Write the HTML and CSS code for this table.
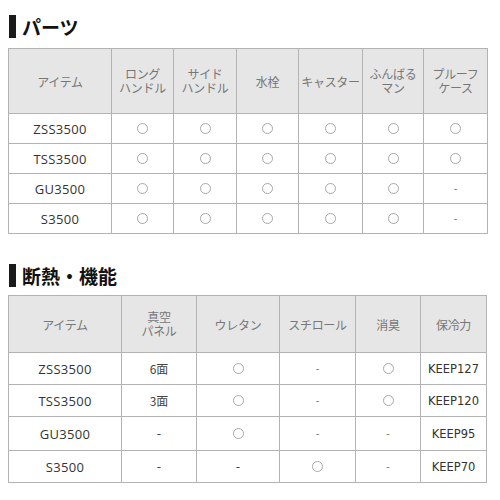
FILE: index.html
```html
<!DOCTYPE html>
<html lang="ja">
<head>
<meta charset="utf-8">
<link rel="stylesheet" href="styles.css">
</head>
<body>
<h2 class="heading h1"><span class="bar"></span>パーツ</h2>
<table class="spec t1">
  <colgroup>
    <col class="c1"><col class="c2"><col class="c3"><col class="c4"><col class="c5"><col class="c6"><col class="c7">
  </colgroup>
  <thead>
    <tr>
      <th>アイテム</th>
      <th><span class="ln">ロング</span><span class="ln">ハンドル</span></th>
      <th><span class="ln">サイド</span><span class="ln">ハンドル</span></th>
      <th>水栓</th>
      <th>キャスター</th>
      <th><span class="ln">ふんばる</span><span class="ln">マン</span></th>
      <th><span class="ln">プルーフ</span><span class="ln">ケース</span></th>
    </tr>
  </thead>
  <tbody>
    <tr><td class="model">ZSS3500</td><td><span class="o"></span></td><td><span class="o"></span></td><td><span class="o"></span></td><td><span class="o"></span></td><td><span class="o"></span></td><td><span class="o"></span></td></tr>
    <tr><td class="model">TSS3500</td><td><span class="o"></span></td><td><span class="o"></span></td><td><span class="o"></span></td><td><span class="o"></span></td><td><span class="o"></span></td><td><span class="o"></span></td></tr>
    <tr><td class="model">GU3500</td><td><span class="o"></span></td><td><span class="o"></span></td><td><span class="o"></span></td><td><span class="o"></span></td><td><span class="o"></span></td><td class="dash">-</td></tr>
    <tr><td class="model">S3500</td><td><span class="o"></span></td><td><span class="o"></span></td><td><span class="o"></span></td><td><span class="o"></span></td><td><span class="o"></span></td><td class="dash">-</td></tr>
  </tbody>
</table>

<h2 class="heading h2"><span class="bar"></span>断熱・機能</h2>
<table class="spec t2">
  <colgroup>
    <col class="d1"><col class="d2"><col class="d3"><col class="d4"><col class="d5"><col class="d6">
  </colgroup>
  <thead>
    <tr>
      <th>アイテム</th>
      <th><span class="ln">真空</span><span class="ln">パネル</span></th>
      <th>ウレタン</th>
      <th>スチロール</th>
      <th>消臭</th>
      <th>保冷力</th>
    </tr>
  </thead>
  <tbody>
    <tr><td class="model">ZSS3500</td><td class="face">6面</td><td><span class="o"></span></td><td class="dash">-</td><td><span class="o"></span></td><td class="keep">KEEP127</td></tr>
    <tr><td class="model">TSS3500</td><td class="face">3面</td><td><span class="o"></span></td><td class="dash">-</td><td><span class="o"></span></td><td class="keep">KEEP120</td></tr>
    <tr><td class="model">GU3500</td><td class="dash2">-</td><td><span class="o"></span></td><td class="dash">-</td><td class="dash">-</td><td class="keep">KEEP95</td></tr>
    <tr><td class="model">S3500</td><td class="dash2">-</td><td class="dash2">-</td><td><span class="o"></span></td><td class="dash">-</td><td class="keep">KEEP70</td></tr>
  </tbody>
</table>
</body>
</html>
```
FILE: styles.css
```css
html, body {
  margin: 0;
  padding: 0;
  background: #fff;
}
body {
  padding: 0 8px;
  font-family: "Noto Sans CJK JP", "Noto Sans", sans-serif;
  color: #555;
}
.heading {
  display: flex;
  align-items: center;
  gap: 6px;
  margin: 0;
  font-size: 19px;
  font-weight: bold;
  color: #111;
  line-height: 23px;
  height: 23px;
  padding-left: 1px;
}
.h1 { margin-top: 15px; margin-bottom: 10px; }
.h2 { margin-top: 30px; margin-bottom: 8px; }
.bar {
  display: block;
  width: 7px;
  height: 23px;
  background: #1a1a1a;
}
.spec {
  border-collapse: collapse;
  table-layout: fixed;
}
.t1 { width: 479px; }
.t2 { width: 478px; }
.spec th, .spec td {
  border: 1px solid #b3b3b3;
  text-align: center;
  vertical-align: middle;
  padding: 0;
}
.spec th {
  background: #e6e6e6;
  font-weight: normal;
  font-size: 12px;
  line-height: 15px;
  color: #777;
  letter-spacing: -0.3px;
}
.ln {
  display: block;
  height: 14px;
  line-height: 14px;
}
.t1 thead tr { height: 65px; }
.t1 tbody tr { height: 30px; }
.t2 thead tr { height: 57px; }
.t2 tbody tr { height: 32px; }
.t2 tbody tr:nth-child(3) { height: 34px; }
.c1 { width: 103px; }
.c2 { width: 62px; }
.c3 { width: 63px; }
.c4 { width: 62px; }
.c5 { width: 64px; }
.c6 { width: 61px; }
.c7 { width: 64px; }
.d1 { width: 113px; }
.d2 { width: 75px; }
.d3 { width: 83px; }
.d4 { width: 76px; }
.d5 { width: 65px; }
.d6 { width: 66px; }
.model {
  font-family: "Open Sans", "DejaVu Sans", sans-serif;
  font-size: 13px;
  color: #333;
  letter-spacing: 0.3px;
}
.face {
  font-size: 12px;
  color: #444;
}
.keep {
  font-family: "DejaVu Sans", sans-serif;
  font-size: 11.5px;
  color: #333;
}
.dash {
  font-family: "DejaVu Sans", sans-serif;
  font-size: 10px;
  color: #777;
}
.dash2 {
  font-family: "DejaVu Sans", sans-serif;
  font-size: 12px;
  color: #444;
}
.o {
  display: block;
  margin: 0 auto;
  width: 9px;
  height: 9px;
  border: 1px solid #a8a8a8;
  border-radius: 50%;
}
```
